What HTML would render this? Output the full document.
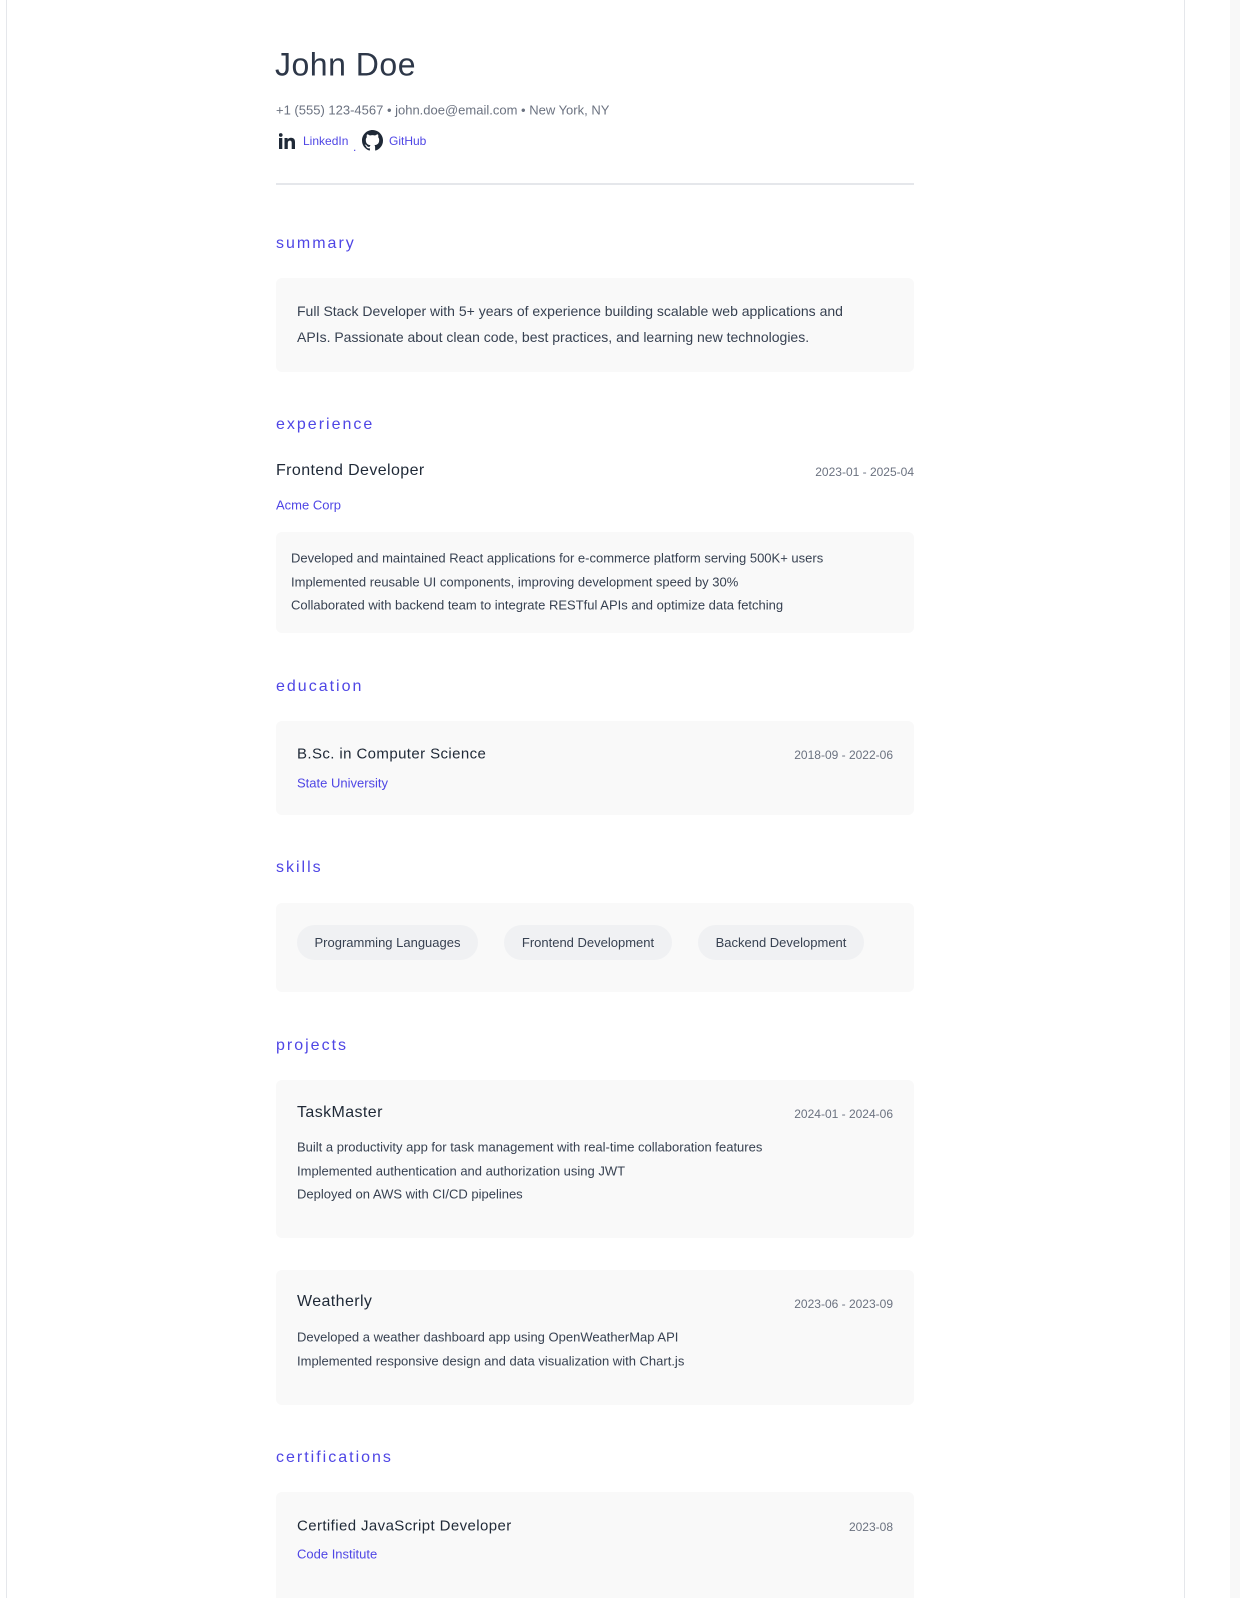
<!DOCTYPE html>
<html style="overflow:hidden;height:1598px"><head><meta charset="utf-8"><style>
*{margin:0;padding:0;box-sizing:border-box}
body{width:1240px;height:1598px;background:#fff;font-family:"Liberation Sans",sans-serif;color:#1f2937;position:relative;overflow:hidden}
.card{position:absolute;left:6px;top:-10px;width:1179px;height:1640px;border:1px solid #e5e7eb;border-radius:10px}
.strip{position:absolute;left:1230px;top:0;width:10px;height:1598px;background:#f8f8f8}
.a{position:absolute;white-space:nowrap}
.h{font-size:16px;letter-spacing:2px;color:#4f46e5;transform:translateY(-50%)}
.box{position:absolute;left:276px;width:638px;background:#f9f9f9;border-radius:6px}
.m{transform:translateY(-50%)}
.t{font-size:16px;color:#1f2937;letter-spacing:.4px}
.d{font-size:12px;color:#6b7280}
.l{font-size:13px;color:#4f46e5}
.b{font-size:13px;color:#374151}
.pill{position:absolute;top:925px;height:35px;border-radius:18px;background:#f0f1f3;font-size:13px;color:#374151;line-height:35px;text-align:center}
</style></head><body>
<div class="card"></div><div class="strip"></div>
<div class="a m" style="left:275px;top:65px;font-size:32px;font-weight:300;color:#2d3748;letter-spacing:.5px">John Doe</div>
<div class="a m" style="left:276px;top:110px;font-size:13px;color:#6b7280">+1 (555) 123-4567 • john.doe@email.com • New York, NY</div>
<svg class="a" style="left:279px;top:133px" width="17" height="16" viewBox="0 0 17 16"><rect x="0" y="5" width="3.3" height="11" fill="#1f2937"/><circle cx="1.7" cy="2" r="1.9" fill="#1f2937"/><path d="M5.5 5h3.1v1.6C9.3 5.4 10.6 4.8 12 4.8c3 0 4 1.8 4 4.5V16h-3.3v-6c0-1.5-.5-2.4-1.8-2.4S8.8 8.6 8.8 10v6H5.5z" fill="#1f2937"/></svg>
<div class="a m l" style="left:303px;top:141px;font-size:12px">LinkedIn</div>
<div class="a" style="left:353px;top:140px;font-size:12px;color:#4f46e5">.</div>
<svg class="a" style="left:362px;top:130px" width="21" height="21" viewBox="0 0 16 16"><path fill="#1f2937" d="M8 0C3.58 0 0 3.58 0 8c0 3.54 2.29 6.53 5.47 7.59.4.07.55-.17.55-.38v-1.33c-2.23.48-2.7-1.07-2.7-1.07-.36-.92-.89-1.17-.89-1.170-.73-.5.05-.49.05-.49.8.06 1.23.83 1.23.83.71 1.22 1.87.87 2.33.66.07-.52.28-.87.5-1.07-1.78-.2-3.640-.89-3.64-3.95 0-.87.31-1.59.82-2.15-.08-.2-.36-1.02.08-2.12 0 0 .67-.21 2.2.82a7.6 7.6 0 0 1 4 0c1.53-1.04 2.2-.82 2.2-.82.44 1.1.16 1.92.08 2.12.51.56.82 1.27.82 2.15 0 3.07-1.87 3.75-3.65 3.95.29.25.54.73.54 1.48v2.2c0 .21.15.46.55.38A8.01 8.01 0 0 0 16 8c0-4.42-3.58-8-8-8z"/></svg>
<div class="a m l" style="left:389px;top:141px;font-size:12px">GitHub</div>
<div class="a" style="left:276px;top:183px;width:638px;height:2px;background:#e5e7eb"></div>

<div class="a h" style="left:276px;top:244px">summary</div>
<div class="box" style="top:278px;height:94px"></div>
<div class="a" style="left:297px;top:299px;font-size:14px;line-height:25.5px;color:#374151;white-space:normal;width:570px">Full Stack Developer with 5+ years of experience building scalable web applications and APIs. Passionate about clean code, best practices, and learning new technologies.</div>

<div class="a h" style="left:276px;top:425px">experience</div>
<div class="a m t" style="left:276px;top:471px">Frontend Developer</div>
<div class="a m d" style="right:326px;top:472px">2023-01 - 2025-04</div>
<div class="a m l" style="left:276px;top:505px">Acme Corp</div>
<div class="box" style="top:532px;height:101px"></div>
<div class="a m b" style="left:291px;top:558px">Developed and maintained React applications for e-commerce platform serving 500K+ users</div>
<div class="a m b" style="left:291px;top:582px">Implemented reusable UI components, improving development speed by 30%</div>
<div class="a m b" style="left:291px;top:605px">Collaborated with backend team to integrate RESTful APIs and optimize data fetching</div>

<div class="a h" style="left:276px;top:687px">education</div>
<div class="box" style="top:721px;height:94px"></div>
<div class="a m t" style="left:297px;top:754px;font-size:15px">B.Sc. in Computer Science</div>
<div class="a m d" style="right:347px;top:755px">2018-09 - 2022-06</div>
<div class="a m l" style="left:297px;top:783px">State University</div>

<div class="a h" style="left:276px;top:868px">skills</div>
<div class="box" style="top:903px;height:89px"></div>
<div class="pill" style="left:297px;width:181px">Programming Languages</div>
<div class="pill" style="left:504px;width:168px">Frontend Development</div>
<div class="pill" style="left:698px;width:166px">Backend Development</div>

<div class="a h" style="left:276px;top:1046px">projects</div>
<div class="box" style="top:1080px;height:158px"></div>
<div class="a m t" style="left:297px;top:1113px">TaskMaster</div>
<div class="a m d" style="right:347px;top:1114px">2024-01 - 2024-06</div>
<div class="a m b" style="left:297px;top:1147px">Built a productivity app for task management with real-time collaboration features</div>
<div class="a m b" style="left:297px;top:1171px">Implemented authentication and authorization using JWT</div>
<div class="a m b" style="left:297px;top:1194px">Deployed on AWS with CI/CD pipelines</div>
<div class="box" style="top:1270px;height:135px"></div>
<div class="a m t" style="left:297px;top:1302px">Weatherly</div>
<div class="a m d" style="right:347px;top:1304px">2023-06 - 2023-09</div>
<div class="a m b" style="left:297px;top:1337px">Developed a weather dashboard app using OpenWeatherMap API</div>
<div class="a m b" style="left:297px;top:1361px">Implemented responsive design and data visualization with Chart.js</div>

<div class="a h" style="left:276px;top:1458px">certifications</div>
<div class="box" style="top:1492px;height:120px"></div>
<div class="a m t" style="left:297px;top:1526px;font-size:15px">Certified JavaScript Developer</div>
<div class="a m d" style="right:347px;top:1527px">2023-08</div>
<div class="a m l" style="left:297px;top:1554px">Code Institute</div>
</body></html>
